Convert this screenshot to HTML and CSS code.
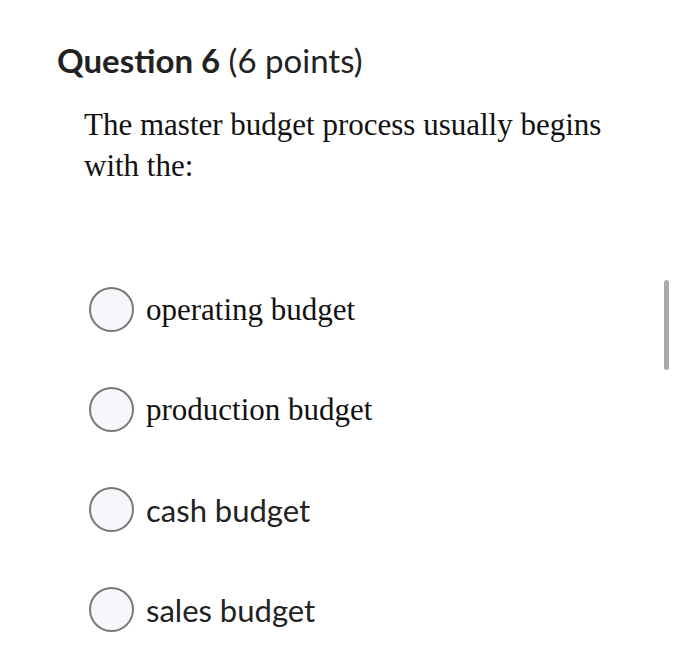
FILE: index.html
```html
<!DOCTYPE html>
<html>
<head>
<meta charset="utf-8">
<link rel="stylesheet" href="styles.css">
</head>
<body>
<div class="page">
  <h2 class="qtitle"><span class="qnum">Question 6</span> (6 points)</h2>
  <div class="qbody">
    <p class="qtext">The master budget process usually begins with the:</p>
    <div class="options">
      <label class="opt"><span class="radio"></span><span class="serif">operating budget</span></label>
      <label class="opt"><span class="radio"></span><span class="serif">production budget</span></label>
      <label class="opt"><span class="radio"></span><span class="sans">cash budget</span></label>
      <label class="opt"><span class="radio"></span><span class="sans">sales budget</span></label>
    </div>
  </div>
  <div class="scrollbar"></div>
</div>
</body>
</html>
```
FILE: styles.css
```css
html, body {
  margin: 0;
  padding: 0;
  background: #ffffff;
}
.page {
  position: relative;
  width: 700px;
  height: 653px;
  padding: 40px 0 0 57px;
  box-sizing: border-box;
}
.qtitle {
  margin: 0;
  font-family: Lato, "Liberation Sans", sans-serif;
  font-size: 33px;
  line-height: 40px;
  font-weight: 400;
  color: #222222;
}
.qnum {
  font-weight: 700;
}
.qbody {
  padding-left: 27px;
  width: 560px;
}
.qtext {
  margin: 24px 0 0 0;
  font-family: "Liberation Serif", serif;
  font-size: 31px;
  line-height: 41px;
  color: #111111;
}
.options {
  display: flex;
  flex-direction: column;
  gap: 55px;
  margin-top: 101px;
  margin-left: 5px;
}
.opt {
  display: flex;
  align-items: center;
  gap: 12px;
  height: 45px;
}
.radio {
  width: 41px;
  height: 41px;
  border: 2px solid #7a7a7a;
  border-radius: 50%;
  background: #f6f7fb;
  flex: none;
}
.serif {
  font-family: "Liberation Serif", serif;
  font-size: 31px;
  color: #111111;
}
.sans {
  font-family: Lato, "Liberation Sans", sans-serif;
  font-size: 31px;
  color: #222222;
}
.scrollbar {
  position: absolute;
  left: 664px;
  top: 280px;
  width: 5px;
  height: 90px;
  border-radius: 3px;
  background: #ababab;
}
```
